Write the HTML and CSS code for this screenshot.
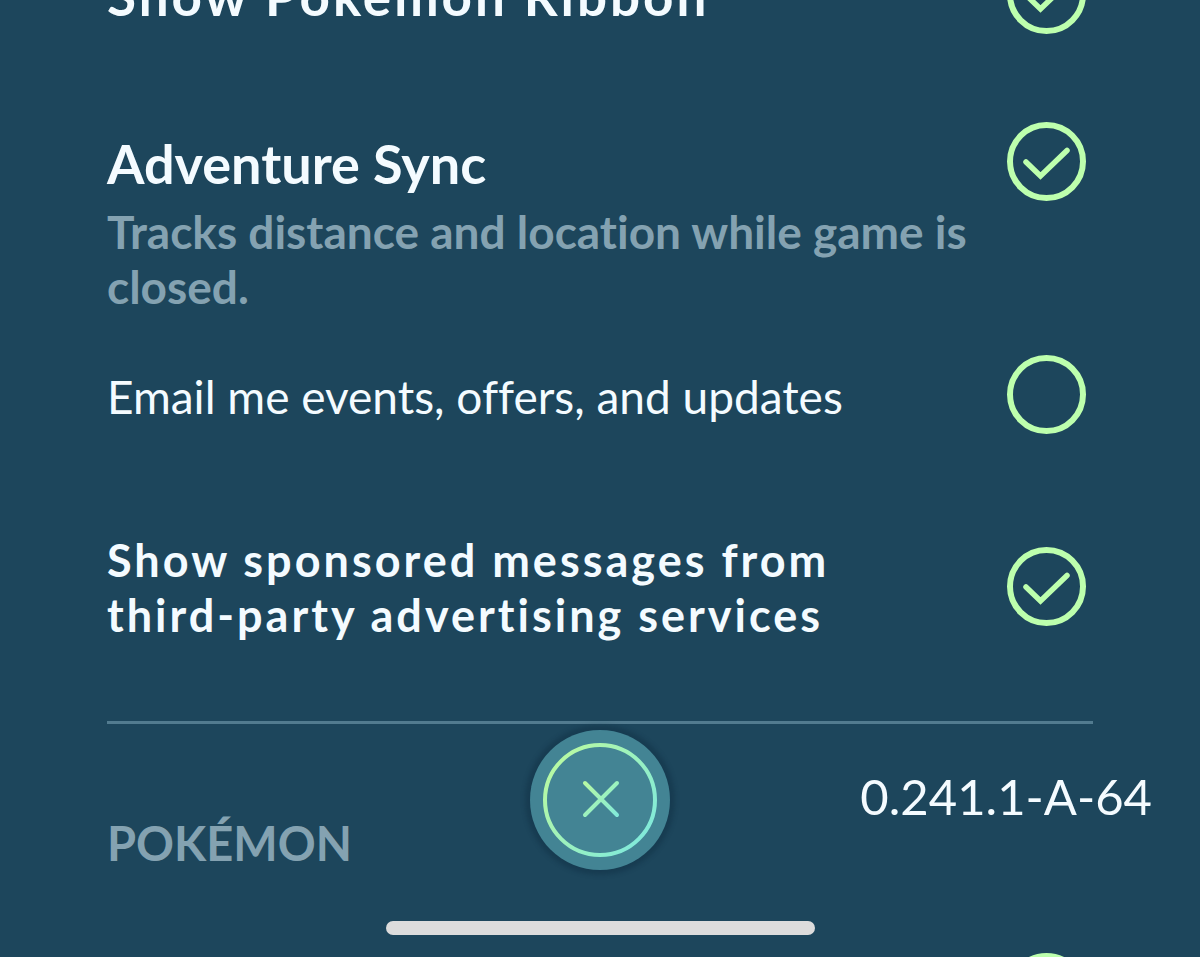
FILE: index.html
```html
<!DOCTYPE html>
<html lang="en">
<head>
  <meta charset="UTF-8">
  <meta name="viewport" content="width=device-width, initial-scale=1.0">
  <title>Settings</title>
  <link rel="stylesheet" href="styles.css">
</head>
<body>
  <svg width="0" height="0" class="defs" aria-hidden="true">
    <symbol id="tick" viewBox="0 0 79 79">
      <path d="M19 40 L33.5 54 L60 28.5" fill="none" stroke="#bdffad" stroke-width="5.5" stroke-linecap="round"/>
    </symbol>
  </svg>

  <main class="settings">
    <div class="row">
      <label for="ribbon" class="title spaced">Show Pokémon Ribbon</label>
      <span class="check">
        <input type="checkbox" id="ribbon" checked>
        <svg><use href="#tick"/></svg>
      </span>
    </div>

    <div class="row row-sync">
      <div>
        <label for="sync" class="title">Adventure Sync</label>
        <p class="hint">Tracks distance and location while game is closed.</p>
      </div>
      <span class="check">
        <input type="checkbox" id="sync" checked>
        <svg><use href="#tick"/></svg>
      </span>
    </div>

    <div class="row row-email">
      <label for="email" class="label">Email me events, offers, and updates</label>
      <span class="check">
        <input type="checkbox" id="email">
        <svg><use href="#tick"/></svg>
      </span>
    </div>

    <div class="row row-sponsored">
      <label for="sponsored" class="label bold spaced">Show sponsored messages from third-party advertising services</label>
      <span class="check">
        <input type="checkbox" id="sponsored" checked>
        <svg><use href="#tick"/></svg>
      </span>
    </div>

    <hr class="divider">

    <h2 class="section">POKÉMON</h2>

    <div class="row row-next">
      <span class="check">
        <input type="checkbox" aria-label="Pokémon setting">
        <svg><use href="#tick"/></svg>
      </span>
    </div>
  </main>

  <footer class="overlay">
    <button type="button" class="close" aria-label="Close">
      <svg viewBox="0 0 140 140">
        <defs>
          <linearGradient id="glow" gradientUnits="userSpaceOnUse" x1="25" y1="35" x2="115" y2="105">
            <stop offset="0" stop-color="#b6f9a4"/>
            <stop offset="1" stop-color="#82ead9"/>
          </linearGradient>
          <linearGradient id="glowCross" gradientUnits="userSpaceOnUse" x1="54" y1="54" x2="87" y2="86">
            <stop offset="0" stop-color="#b6f9a4"/>
            <stop offset="1" stop-color="#82ead9"/>
          </linearGradient>
        </defs>
        <circle cx="70" cy="70" r="55" fill="none" stroke="url(#glow)" stroke-width="4"/>
        <path d="M55 53 L87 85 M87 53 L55 85" fill="none" stroke="url(#glowCross)" stroke-width="4" stroke-linecap="round"/>
      </svg>
    </button>
    <span class="version">0.241.1-A-64</span>
    <div class="home-bar"></div>
  </footer>
</body>
</html>
```
FILE: styles.css
```css
* {
  box-sizing: border-box;
}

body {
  margin: 0;
  height: 100vh;
  overflow: hidden;
  background-color: #1d465c;
  font-family: Lato, sans-serif;
  font-variant-ligatures: none;
  color: #f4fbff;
}

.defs {
  position: absolute;
}

/* list is scrolled part of the way down */
.settings {
  margin-top: -46px;
  padding: 0 107px;
}

.row {
  display: flex;
  justify-content: space-between;
  align-items: center;
  gap: 20px;
  padding-right: 7px;
}

.row label {
  padding-top: 4px;
}

.row-sync {
  align-items: flex-start;
  margin-top: 88px;
}

.row-email {
  margin-top: 41px;
}

.row-sponsored {
  margin-top: 95px;
}

.row-next {
  justify-content: flex-end;
  margin-top: 82px;
}

.title {
  display: block;
  font-size: 53px;
  line-height: 76px;
  font-weight: 700;
}

.row-sync .title {
  font-size: 54px;
}

.hint {
  margin: 2px 0 0;
  font-size: 46px;
  line-height: 55px;
  font-weight: 700;
  color: #84a2b1;
}

.label {
  max-width: 760px;
  font-size: 46px;
  line-height: 55px;
}

.bold {
  font-size: 45px;
  font-weight: 700;
}

.spaced {
  letter-spacing: 3px;
}

.check {
  display: grid;
  flex: none;
  width: 79px;
  height: 79px;
}

.check input,
.check svg {
  grid-area: 1 / 1;
  width: 100%;
  height: 100%;
  margin: 0;
}

.check input {
  appearance: none;
  border: 6px solid #bdffad;
  border-radius: 50%;
  cursor: pointer;
}

.check svg {
  visibility: hidden;
  pointer-events: none;
}

.check input:checked + svg {
  visibility: visible;
}

.divider {
  height: 3px;
  margin: 78px 0 0;
  border: none;
  background-color: #527b8f;
}

.section {
  margin: 92px 0 0;
  font-size: 47px;
  line-height: 55px;
  font-weight: 700;
  color: #84a2b1;
}

/* stays on top of the list */
.overlay {
  position: fixed;
  left: 0;
  right: 0;
  bottom: 22px;
  display: grid;
  grid-template-columns: 1fr 140px 1fr;
  row-gap: 51px;
  justify-items: center;
}

.close {
  grid-column: 2;
  width: 140px;
  height: 140px;
  padding: 0;
  border: none;
  border-radius: 50%;
  background-color: #438494;
  box-shadow: 0 0 4px 5px rgba(16, 46, 66, 0.4);
  cursor: pointer;
}

.close svg {
  display: block;
}

.version {
  grid-column: 3;
  justify-self: end;
  margin: 36px 48px 0 0;
  font-size: 49px;
  line-height: 60px;
}

.home-bar {
  grid-column: 1 / -1;
  width: 429px;
  height: 14px;
  border-radius: 7px;
  background-color: #dcdcdc;
}
```
